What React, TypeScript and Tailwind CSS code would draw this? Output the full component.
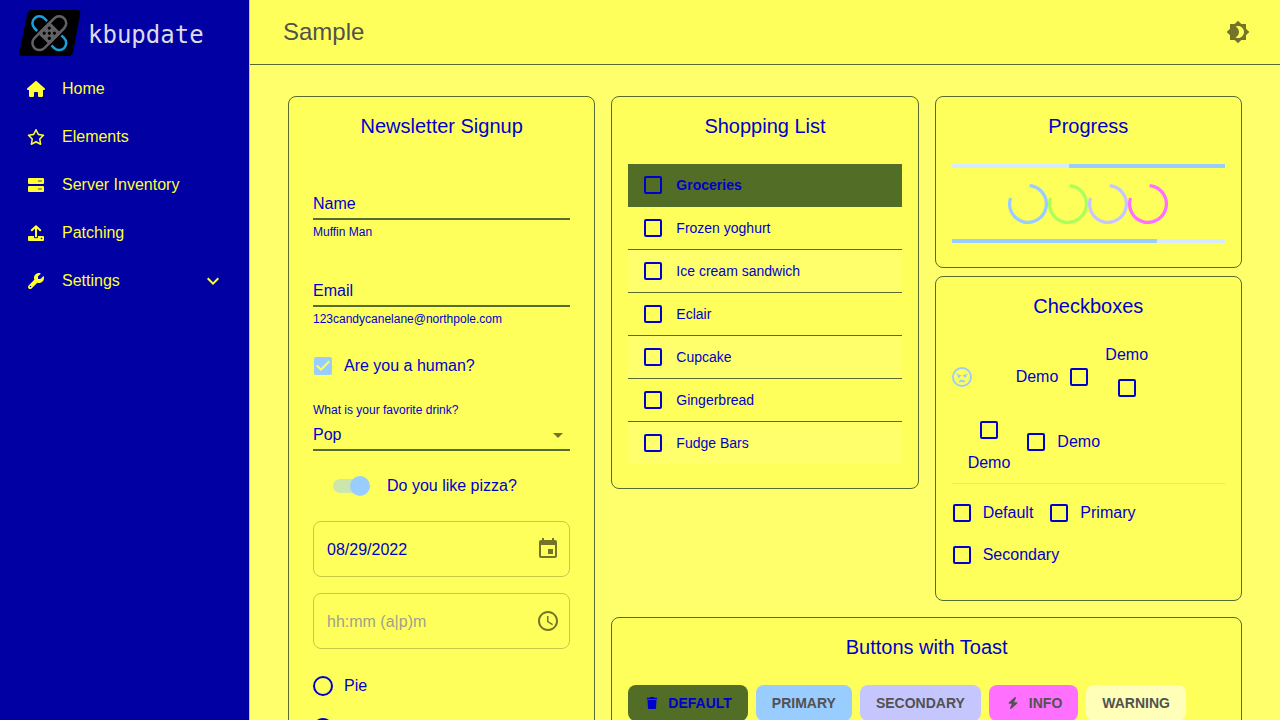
import { useState } from "react";
import type { ReactNode } from "react";
import { MdAccessTime, MdArrowDropDown, MdBrightness4, MdEvent, MdExpandMore } from "react-icons/md";
import { FaBolt, FaHouse, FaRegFaceAngry, FaRegStar, FaTrash, FaWrench } from "react-icons/fa6";

function Logo() {
  return (
    <svg viewBox="0 0 62 46" className="h-[46px] w-[62px] shrink-0" aria-hidden="true">
      <path
        d="M12.5 0H57.5Q62 0 61.2 4.2L54 42.2Q53.2 46 49.5 46H4Q-.6 46 .4 42L8.3 3.6Q9.2 0 12.5 0Z"
        fill="#000"
      />
      <g transform="translate(30.3 23.2)" fill="none" strokeWidth="2.5">
        <g stroke="#1a9fe0">
          <path d="M-2.2 -12.1 -4.95 -14.85A7 7 0 0 0 -14.85 -4.95L-12.1 -2.2" />
          <path d="M2.2 12.1 4.95 14.85A7 7 0 0 0 14.85 4.95L12.1 2.2" />
        </g>
        <g stroke="#626266" transform="rotate(-45)">
          <rect x="-21" y="-7" width="42" height="14" rx="7" fill="#000" />
          <rect x="-7" y="-7" width="14" height="14" fill="#626266" />
          <g fill="#000" stroke="none">
            <circle cx="-3.6" cy="-3.6" r="1.6" />
            <circle cx="3.6" cy="-3.6" r="1.6" />
            <circle cx="-3.6" cy="3.6" r="1.6" />
            <circle cx="3.6" cy="3.6" r="1.6" />
            <circle r="1.6" />
          </g>
        </g>
      </g>
    </svg>
  );
}

function ServerIcon() {
  return (
    <svg viewBox="0 0 16 16" width="16" height="16" aria-hidden="true">
      <rect y="1" width="16" height="6" rx="1" fill="currentColor" />
      <rect y="9" width="16" height="6" rx="1" fill="currentColor" />
      <path d="M10 3h4v2h-4zM10 11h4v2h-4z" fill="#a3a352" />
    </svg>
  );
}

function UploadIcon() {
  return (
    <svg viewBox="0 0 16 16" width="16" height="16" aria-hidden="true">
      <path
        d="M1 11h5v1.2a1 1 0 0 0 1 1h2a1 1 0 0 0 1-1V11h5a1 1 0 0 1 1 1v3a1 1 0 0 1-1 1H1a1 1 0 0 1-1-1v-3a1 1 0 0 1 1-1Zm12.5 1.7a.8.8 0 1 0 0 1.6.8.8 0 0 0 0-1.6Z"
        fill="currentColor"
      />
      <path
        d="M8 11.5V1.2M3.8 5.2 8 1.2l4.2 4"
        fill="none"
        stroke="currentColor"
        strokeWidth="2"
        strokeLinecap="round"
        strokeLinejoin="round"
      />
    </svg>
  );
}

const navItems: { label: string; icon: ReactNode; expandable?: boolean }[] = [
  { label: "Home", icon: <FaHouse className="h-4 w-[18px]" /> },
  { label: "Elements", icon: <FaRegStar className="h-4 w-[18px]" /> },
  { label: "Server Inventory", icon: <ServerIcon /> },
  { label: "Patching", icon: <UploadIcon /> },
  { label: "Settings", icon: <FaWrench className="size-4" />, expandable: true },
];

function Sidebar() {
  return (
    <aside className="w-[250px] shrink-0 border-r border-[#c0c0c0] bg-[#0000a3] text-[#ffff33]">
      <a href="#" className="flex h-[65px] items-center gap-[7px] pl-[19px] text-[#dcdce4]">
        <Logo />
        <span className="pt-1 font-['DejaVu_Sans_Mono',monospace] text-2xl">kbupdate</span>
      </a>
      <nav>
        {navItems.map((item) => (
          <a key={item.label} href="#" className="flex h-12 items-center pr-6 pl-6">
            <span className="flex w-6 justify-center">{item.icon}</span>
            <span className="ml-[14px] grow">{item.label}</span>
            {item.expandable && <MdExpandMore className="size-6" />}
          </a>
        ))}
      </nav>
    </aside>
  );
}

function Card({ title, className, children }: { title: string; className: string; children: ReactNode }) {
  return (
    <section className={`rounded-lg border border-[#556b2f] bg-[#ffff5c] pt-4 pb-6 ${className}`}>
      <h2 className="mb-6 text-center text-xl leading-[27px]">{title}</h2>
      {children}
    </section>
  );
}

function Box() {
  return (
    <input
      type="checkbox"
      className="size-[18px] shrink-0 appearance-none rounded-xs border-2 border-[#0000cd] checked:bg-[#99ccff]"
    />
  );
}

function Field({ label, helper, className }: { label: string; helper: string; className: string }) {
  return (
    <div className={className}>
      <input
        type="text"
        aria-label={label}
        placeholder={label}
        className="block h-8 w-full border-b-2 border-[#556b2f] bg-transparent pt-0.5 outline-none placeholder:text-[#0000cd] placeholder:opacity-100"
      />
      <p className="mt-1 text-xs leading-4">{helper}</p>
    </div>
  );
}

function PickerField({
  label,
  value,
  placeholder,
  icon,
}: {
  label: string;
  value?: string;
  placeholder?: string;
  icon: ReactNode;
}) {
  return (
    <div className="flex h-14 items-center rounded-lg border border-[#c8c848] pr-[9px] pl-[13px]">
      <input
        type="text"
        aria-label={label}
        defaultValue={value}
        placeholder={placeholder}
        className="min-w-0 grow bg-transparent pt-0.5 outline-none placeholder:text-[#9f9f8c] placeholder:opacity-100"
      />
      <button type="button" aria-label={`Choose ${label}`} className="text-[#747429]">
        {icon}
      </button>
    </div>
  );
}

function Newsletter() {
  const [human, setHuman] = useState(true);
  const [pizza, setPizza] = useState(true);
  return (
    <Card title="Newsletter Signup" className="self-start px-6">
      <form>
        <Field label="Name" helper="Muffin Man" className="mt-12" />
        <Field label="Email" helper="123candycanelane@northpole.com" className="mt-[35px]" />
        <label className="mt-[19px] flex h-10 items-center gap-3 pl-px">
          <span className="grid size-[18px] place-items-center">
            <input
              type="checkbox"
              checked={human}
              onChange={(e) => setHuman(e.target.checked)}
              className="col-start-1 row-start-1 size-[18px] appearance-none rounded-xs border-2 border-[#0000cd] checked:border-[#99ccff] checked:bg-[#99ccff]"
            />
            {human && (
              <svg
                viewBox="0 0 18 18"
                className="pointer-events-none col-start-1 row-start-1 size-[18px]"
                aria-hidden="true"
              >
                <path d="M7 14 2 9l1.41-1.41L7 11.17l7.59-7.59L16 5z" fill="#ffff5c" />
              </svg>
            )}
          </span>
          Are you a human?
        </label>
        <label htmlFor="drink" className="mt-4 block text-xs leading-4">
          What is your favorite drink?
        </label>
        <div className="grid items-center">
          <select
            id="drink"
            className="col-start-1 row-start-1 h-[33px] w-full appearance-none border-b-2 border-[#556b2f] bg-transparent pt-0.5 outline-none"
          >
            <option>Pop</option>
          </select>
          <MdArrowDropDown className="pointer-events-none col-start-1 row-start-1 size-6 justify-self-end text-[#747429]" />
        </div>
        <label className="mt-[15px] flex h-10 items-center gap-[17px] pl-5">
          <span className="grid w-[37px] items-center">
            <input
              type="checkbox"
              role="switch"
              checked={pizza}
              onChange={(e) => setPizza(e.target.checked)}
              className="col-start-1 row-start-1 h-3.5 w-[34px] appearance-none rounded-full bg-[#cce6ad]"
            />
            <span
              className={
                pizza
                  ? "pointer-events-none col-start-1 row-start-1 size-5 justify-self-end rounded-full bg-[#99ccff]"
                  : "pointer-events-none col-start-1 row-start-1 size-5 justify-self-start rounded-full bg-white"
              }
            />
          </span>
          Do you like pizza?
        </label>
        <div className="mt-[15px] flex flex-col gap-4">
          <PickerField label="date" value="08/29/2022" icon={<MdEvent className="size-6" />} />
          <PickerField label="time" placeholder="hh:mm (a|p)m" icon={<MdAccessTime className="size-6" />} />
        </div>
        <div className="mt-4">
          {["Pie", "Cake"].map((dessert) => (
            <label key={dessert} className="flex h-[42px] items-center gap-[11px] leading-4">
              <input
                type="radio"
                name="dessert"
                className="size-5 appearance-none rounded-full border-2 border-[#0000cd] checked:bg-[#99ccff]"
              />
              {dessert}
            </label>
          ))}
        </div>
      </form>
    </Card>
  );
}

const groceries = ["Frozen yoghurt", "Ice cream sandwich", "Eclair", "Cupcake", "Gingerbread", "Fudge Bars"];

function ShoppingList() {
  return (
    <Card title="Shopping List" className="self-start px-4">
      <table className="w-full border-separate border-spacing-0 text-left text-sm">
        <thead>
          <tr className="bg-[#526d26]">
            <th className="border-b border-[#526d26] py-0 pl-4 font-bold">
              <label className="flex h-[42px] items-center gap-[14px]">
                <Box />
                Groceries
              </label>
            </th>
          </tr>
        </thead>
        <tbody>
          {groceries.map((item) => (
            <tr key={item} className="group even:bg-[#ffff6b]">
              <td className="border-b border-[#556b2f] py-0 pl-4 group-last:border-b-0">
                <label className="flex h-[42px] items-center gap-[14px]">
                  <Box />
                  {item}
                </label>
              </td>
            </tr>
          ))}
        </tbody>
      </table>
    </Card>
  );
}

function Bar({ children }: { children: ReactNode }) {
  return <div className="flex h-1 bg-[#d6ebff]">{children}</div>;
}

const spinners = ["#99ccff", "#aaff5c", "#c6c6ff", "#ff70ff"];

function Progress() {
  return (
    <Card title="Progress" className="px-4">
      <Bar>
        <div className="ml-auto h-full w-[57%] bg-[#99ccff]" />
      </Bar>
      <div className="mt-4 flex justify-center">
        {spinners.map((color) => (
          <svg key={color} viewBox="22 22 44 44" className="size-10" role="progressbar">
            <path d="M45.8 23.9A20.2 20.2 0 1 1 24.9 37.4" fill="none" stroke={color} strokeWidth="3.6" />
          </svg>
        ))}
      </div>
      <div className="mt-[15px]">
        <Bar>
          <div className="h-full w-3/4 bg-[#99ccff]" />
        </Bar>
      </div>
    </Card>
  );
}

function Checkboxes() {
  return (
    <Card title="Checkboxes" className="px-4">
      <div className="flex h-[65px] items-center">
        <label className="mr-[43px] grid size-[21px] place-items-center text-[#99ccff]">
          <input
            type="checkbox"
            aria-label="Angry"
            defaultChecked
            className="col-start-1 row-start-1 size-5 appearance-none"
          />
          <FaRegFaceAngry className="pointer-events-none col-start-1 row-start-1 size-5" />
        </label>
        <label className="mr-[17px] flex items-center gap-3">
          Demo
          <Box />
        </label>
        <label className="flex flex-col items-center gap-0.5">
          <span className="leading-[21px]">Demo</span>
          <span className="flex h-[42px] items-center">
            <Box />
          </span>
        </label>
      </div>
      <div className="flex h-[65px] items-center pl-4">
        <label className="mr-[17px] flex flex-col items-center">
          <span className="flex h-[42px] items-center">
            <Box />
          </span>
          <span className="leading-[23px]">Demo</span>
        </label>
        <label className="flex items-center gap-3">
          <Box />
          Demo
        </label>
      </div>
      <hr className="mt-[9px] mb-2 border-[#e2e29c]" />
      <div className="flex flex-wrap gap-x-[17px] pl-px">
        {["Default", "Primary", "Secondary"].map((name) => (
          <label key={name} className="flex h-[42px] items-center gap-3">
            <Box />
            {name}
          </label>
        ))}
      </div>
    </Card>
  );
}

const toastButton = "flex h-9 items-center rounded-lg px-4 text-sm font-bold uppercase";

function Buttons() {
  return (
    <Card title="Buttons with Toast" className="px-4">
      <div className="flex flex-wrap gap-2">
        <button type="button" className={`${toastButton} gap-2 bg-[#526d26]`}>
          <FaTrash className="mx-0.5 size-3" />
          Default
        </button>
        <button type="button" className={`${toastButton} bg-[#99ccff] text-[#525252]`}>
          Primary
        </button>
        <button type="button" className={`${toastButton} bg-[#c6c6ff] text-[#525252]`}>
          Secondary
        </button>
        <button type="button" className={`${toastButton} gap-2 bg-[#ff70ff] text-[#525252]`}>
          <FaBolt className="mx-0.5 size-3" />
          Info
        </button>
        <button type="button" className={`${toastButton} bg-[#ffffb8] text-[#525252]`}>
          Warning
        </button>
      </div>
    </Card>
  );
}

export default function App() {
  return (
    <div className="flex h-screen bg-[#ffff6b] font-['Liberation_Sans',Arial,sans-serif] text-base text-[#0000cd]">
      <Sidebar />
      <div className="flex min-w-0 grow flex-col">
        <header className="flex h-[65px] shrink-0 items-center justify-between border-b border-[#556b2f] bg-[#ffff5c] pr-[30px] pl-[33px]">
          <h1 className="text-2xl text-[#52524a]">Sample</h1>
          <button type="button" aria-label="Toggle theme" className="text-[#747429]">
            <MdBrightness4 className="size-6" />
          </button>
        </header>
        <main className="grow overflow-y-auto px-[38px] pt-[31px] pb-8 [scrollbar-width:none]">
          <div className="grid grid-cols-3 gap-4">
            <Newsletter />
            <div className="col-span-2 grid grid-cols-2 gap-4 self-start">
              <ShoppingList />
              <div className="flex flex-col gap-2">
                <Progress />
                <Checkboxes />
              </div>
              <div className="col-span-2">
                <Buttons />
              </div>
            </div>
          </div>
        </main>
      </div>
    </div>
  );
}
